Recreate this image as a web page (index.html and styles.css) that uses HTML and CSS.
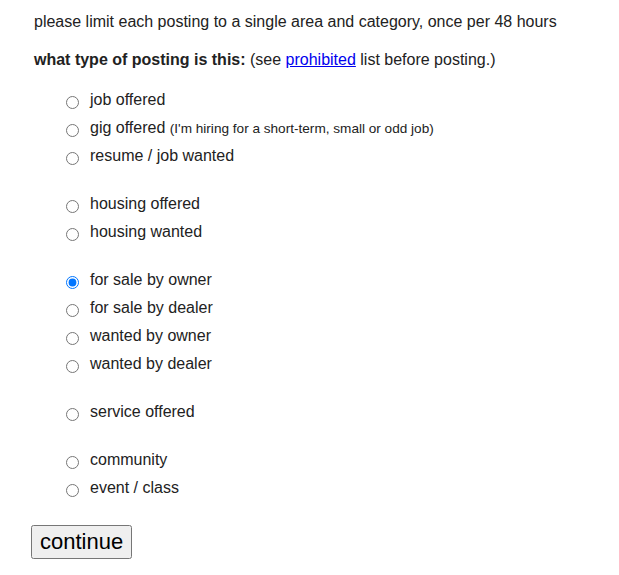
FILE: index.html
```html
<!DOCTYPE html>
<html>
<head>
<meta charset="utf-8">
<link rel="stylesheet" href="styles.css">
</head>
<body>
<form class="page">
  <p class="intro">please limit each posting to a single area and category, once per 48 hours</p>
  <p class="question"><b>what type of posting is this:</b> (see <a href="#">prohibited</a> list before posting.)</p>
  <div class="choices">
    <div class="group">
      <label class="row"><input type="radio" name="id"><span>job offered</span></label>
      <label class="row"><input type="radio" name="id"><span>gig offered <small>(I'm hiring for a short-term, small or odd job)</small></span></label>
      <label class="row"><input type="radio" name="id"><span>resume / job wanted</span></label>
    </div>
    <div class="group">
      <label class="row"><input type="radio" name="id"><span>housing offered</span></label>
      <label class="row"><input type="radio" name="id"><span>housing wanted</span></label>
    </div>
    <div class="group">
      <label class="row"><input type="radio" name="id" checked><span>for sale by owner</span></label>
      <label class="row"><input type="radio" name="id"><span>for sale by dealer</span></label>
      <label class="row"><input type="radio" name="id"><span>wanted by owner</span></label>
      <label class="row"><input type="radio" name="id"><span>wanted by dealer</span></label>
    </div>
    <div class="group">
      <label class="row"><input type="radio" name="id"><span>service offered</span></label>
    </div>
    <div class="group">
      <label class="row"><input type="radio" name="id"><span>community</span></label>
      <label class="row"><input type="radio" name="id"><span>event / class</span></label>
    </div>
  </div>
  <button type="button" class="go">continue</button>
</form>
</body>
</html>
```
FILE: styles.css
```css
html, body {
  margin: 0;
  padding: 0;
  background: #fff;
}
body {
  font-family: "Liberation Sans", Arial, sans-serif;
  font-size: 16px;
  color: #222;
}
.page {
  padding: 13px 0 0 34px;
}
.intro {
  margin: 0;
  line-height: 18px;
}
.question {
  margin: 20px 0 0 0;
  line-height: 18px;
}
.question a {
  color: #0000ee;
}
.choices {
  margin-top: 17px;
  padding-left: 32px;
}
.group {
  margin-bottom: 20px;
}
.group:last-child {
  margin-bottom: 0;
}
.row {
  display: block;
  height: 28px;
  line-height: 28px;
  white-space: nowrap;
}
.row input {
  margin: 0 11px 0 0;
  width: 13px;
  height: 13px;
  vertical-align: -4px;
}
.row small {
  font-size: 13.6px;
}
.go {
  margin-top: 23px;
  margin-left: -3px;
  font-family: "Liberation Sans", Arial, sans-serif;
  font-size: 22px;
  color: #000;
  padding: 2px 7px;
}
```
